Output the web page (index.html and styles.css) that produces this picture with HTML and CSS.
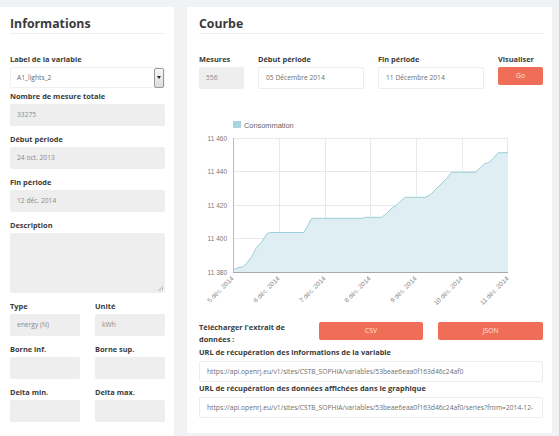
FILE: index.html
```html
<!DOCTYPE html>
<html lang="fr">
<head>
    <meta charset="UTF-8">
    <title>Variable - Courbe</title>
    <link rel="stylesheet" href="styles.css">
</head>
<body>
    <div class="panel panel-info">
        <div class="panel-head"><h2>Informations</h2></div>

        <div class="form">
            <div class="field field-select">
                <span class="field-label">Label de la variable</span>
                <div class="select">
                    <span>A1_lights_2</span>
                    <span class="select-arrow"></span>
                </div>
            </div>
            <div class="field">
                <span class="field-label">Nombre de mesure totale</span>
                <div class="box">33275</div>
            </div>
            <div class="field">
                <span class="field-label">Début période</span>
                <div class="box">24 oct. 2013</div>
            </div>
            <div class="field">
                <span class="field-label">Fin période</span>
                <div class="box">12 déc. 2014</div>
            </div>
            <div class="field">
                <span class="field-label">Description</span>
                <div class="box textarea"><span class="grip"></span></div>
            </div>
            <div class="field-pair">
                <div class="field">
                    <span class="field-label">Type</span>
                    <div class="box">energy (N)</div>
                </div>
                <div class="field">
                    <span class="field-label">Unité</span>
                    <div class="box">kWh</div>
                </div>
            </div>
            <div class="field-pair">
                <div class="field">
                    <span class="field-label">Borne inf.</span>
                    <div class="box"></div>
                </div>
                <div class="field">
                    <span class="field-label">Borne sup.</span>
                    <div class="box"></div>
                </div>
            </div>
            <div class="field-pair">
                <div class="field last">
                    <span class="field-label">Delta min.</span>
                    <div class="box"></div>
                </div>
                <div class="field last">
                    <span class="field-label">Delta max.</span>
                    <div class="box"></div>
                </div>
            </div>
        </div>
    </div>

    <div class="panel panel-curve">
        <div class="panel-head"><h2>Courbe</h2></div>

        <div class="filters">
            <div>
                <span class="field-label">Mesures</span>
                <div class="box">556</div>
            </div>
            <div>
                <span class="field-label">Début période</span>
                <div class="box white">05 Décembre 2014</div>
            </div>
            <div>
                <span class="field-label">Fin période</span>
                <div class="box white">11 Décembre 2014</div>
            </div>
            <div>
                <span class="field-label">Visualiser</span>
                <div class="btn btn-go">Go</div>
            </div>
        </div>

        <svg class="chart" width="344" height="210" viewBox="0 0 344 210">
            <!-- legende -->
            <rect x="34" y="21" width="8" height="7" fill="#a8d4e0"/>
            <text x="45" y="27.5" class="legend">Consommation</text>

            <!-- grille -->
            <g stroke="#e8e8e8" stroke-width="1">
                <line x1="34" y1="38.5" x2="309" y2="38.5"/>
                <line x1="34" y1="71.5" x2="309" y2="71.5"/>
                <line x1="34" y1="105.5" x2="309" y2="105.5"/>
                <line x1="34" y1="138.5" x2="309" y2="138.5"/>
                <line x1="80.5" y1="38" x2="80.5" y2="172"/>
                <line x1="126.5" y1="38" x2="126.5" y2="172"/>
                <line x1="171.5" y1="38" x2="171.5" y2="172"/>
                <line x1="217.5" y1="38" x2="217.5" y2="172"/>
                <line x1="263.5" y1="38" x2="263.5" y2="172"/>
                <line x1="308.5" y1="38" x2="308.5" y2="172"/>
            </g>

            <polygon fill="#dfeef3" points="34,172 34,170 39,167.7 44,166.7 47.7,163.3 52.7,156.7 57,148.3 62.7,141.7 68.3,133.3 71.7,132.5 105,132.5 112.7,118.3 163.7,118.3 166,117.3 182.7,117.3 187.7,113.3 192.7,108.3 197.7,105 201,101.7 206,97.3 226,97.3 231,95 234.3,91.7 241,85 247.7,78.3 252.7,72.3 276,72.3 281,68.3 285,64 289.3,62.7 292.7,60 299.3,52.7 309,52.7 309,172"/>
            <polyline fill="none" stroke="#9dcfd8" stroke-width="1" points="34,170 39,167.7 44,166.7 47.7,163.3 52.7,156.7 57,148.3 62.7,141.7 68.3,133.3 71.7,132.5 105,132.5 112.7,118.3 163.7,118.3 166,117.3 182.7,117.3 187.7,113.3 192.7,108.3 197.7,105 201,101.7 206,97.3 226,97.3 231,95 234.3,91.7 241,85 247.7,78.3 252.7,72.3 276,72.3 281,68.3 285,64 289.3,62.7 292.7,60 299.3,52.7 309,52.7"/>

            <!-- axes -->
            <line x1="34.5" y1="38" x2="34.5" y2="172" stroke="#bdbdbd"/>
            <line x1="34" y1="172.5" x2="309" y2="172.5" stroke="#a8a8a8"/>

            <g class="tick-y">
                <text x="28" y="40.5">11 460</text>
                <text x="28" y="74">11 440</text>
                <text x="28" y="107.5">11 420</text>
                <text x="28" y="141">11 400</text>
                <text x="28" y="174.5">11 380</text>
            </g>
            <g class="tick-x">
                <text x="35" y="179" transform="rotate(-45 35 179)">5 déc. 2014</text>
                <text x="81" y="179" transform="rotate(-45 81 179)">6 déc. 2014</text>
                <text x="127" y="179" transform="rotate(-45 127 179)">7 déc. 2014</text>
                <text x="172" y="179" transform="rotate(-45 172 179)">8 déc. 2014</text>
                <text x="218" y="179" transform="rotate(-45 218 179)">9 déc. 2014</text>
                <text x="264" y="179" transform="rotate(-45 264 179)">10 déc. 2014</text>
                <text x="310" y="179" transform="rotate(-45 310 179)">11 déc. 2014</text>
            </g>
        </svg>

        <div class="export">
            <span class="field-label wrap">Télécharger l'extrait de données :</span>
            <div class="btn">CSV</div>
            <div class="btn">JSON</div>
        </div>

        <div class="url-field">
            <span class="field-label">URL de récupération des informations de la variable</span>
            <div class="box white url">https://api.openrj.eu/v1/sites/CSTB_SOPHIA/variables/53beae6eaa0f163d46c24af0</div>
        </div>
        <div class="url-field">
            <span class="field-label">URL de récupération des données affichées dans le graphique</span>
            <div class="box white url">https://api.openrj.eu/v1/sites/CSTB_SOPHIA/variables/53beae6eaa0f163d46c24af0/series?from=2014-12-</div>
        </div>
    </div>
</body>
</html>
```

FILE: styles.css
```css
html, body {
    margin: 0;
    height: 436px;
    overflow: hidden;
}
body {
    background-color: #f1f2f4;
    font-family: "Open Sans", "Liberation Sans", sans-serif;
    color: #3a3a3a;
    display: flex;
    align-items: flex-start;
    gap: 13px;
    padding-top: 7px;
    box-sizing: border-box;
}
.panel {
    background-color: #FFFFFF;
    box-sizing: border-box;
}
.panel-info {
    width: 174px;
    padding: 0 9px 14px 10px;
}
.panel-curve {
    width: 365px;
    padding: 0 9px 15px 12px;
}
.panel-head {
    height: 26px;
    border-bottom: 1px solid #eeeeee;
}
.panel-head h2 {
    margin: 0;
    padding-top: 9px;
    font-size: 12.3px;
    line-height: 16px;
    font-weight: 700;
    color: #3b3b3b;
}
.form {
    margin-top: 20px;
}
.field {
    margin-bottom: 8px;
}
.field-select {
    margin-bottom: 3px;
}
.field.last {
    margin-bottom: 0;
}
.field-pair {
    display: grid;
    grid-template-columns: 1fr 1fr;
    gap: 15px;
}
.field-label {
    display: block;
    font-size: 7.4px;
    line-height: 10px;
    font-weight: 700;
    margin-bottom: 3px;
    white-space: nowrap;
}
.box {
    height: 22px;
    box-sizing: border-box;
    background-color: #eeeeee;
    border-radius: 2px;
    font-size: 6.7px;
    line-height: 22px;
    padding: 0 7px;
    color: #8a8a8a;
    white-space: nowrap;
    overflow: hidden;
}
.box.white {
    background-color: #FFFFFF;
    border: 1px solid #ececec;
    line-height: 20px;
    color: #6f6f6f;
}
.textarea {
    height: 60px;
    position: relative;
}
.grip {
    position: absolute;
    right: 2px;
    bottom: 2px;
    width: 5px;
    height: 5px;
    background: linear-gradient(135deg, transparent 45%, #b5b5b5 45%, #b5b5b5 55%, transparent 55%, transparent 70%, #b5b5b5 70%, #b5b5b5 80%, transparent 80%);
}
.select {
    height: 21px;
    box-sizing: border-box;
    border: 1px solid #f0f0f0;
    border-radius: 2px;
    display: flex;
    align-items: center;
    justify-content: space-between;
    padding-left: 6px;
    font-size: 6.7px;
    color: #6a6a6a;
}
.select-arrow {
    width: 10px;
    height: 20px;
    box-sizing: border-box;
    border: 1px solid #9a9a9a;
    border-radius: 2px;
    background: linear-gradient(#f7f7f7, #dcdcdc);
    display: flex;
    align-items: center;
    justify-content: center;
}
.select-arrow::after {
    content: "";
    border-left: 2px solid transparent;
    border-right: 2px solid transparent;
    border-top: 3px solid #222;
}
.filters {
    margin-top: 20px;
    display: grid;
    grid-template-columns: 45px 1fr 1fr 45px;
    gap: 14px;
}
.btn {
    height: 18px;
    background-color: #f06e58;
    border-radius: 2px;
    color: #fde3dd;
    font-size: 6.7px;
    line-height: 18px;
    text-align: center;
}
.chart {
    display: block;
    margin-top: 11px;
    font-family: "Liberation Sans", Arial, sans-serif;
}
.chart .legend {
    font-size: 7.4px;
    fill: #666;
}
.tick-y text {
    font-size: 6.5px;
    fill: #777;
    text-anchor: end;
}
.tick-x text {
    font-size: 6.5px;
    fill: #888;
    text-anchor: end;
}
.export {
    margin-top: 11px;
    display: grid;
    grid-template-columns: 1fr 1fr 1fr;
    gap: 15px;
    align-items: start;
}
.export .btn {
    margin-top: 1px;
}
.field-label.wrap {
    white-space: normal;
    line-height: 12px;
    margin-bottom: 0;
}
.url-field {
    margin-top: 2px;
}
.url-field + .url-field {
    margin-top: 1px;
}
.url-field .field-label {
    margin-bottom: 4px;
}
.url {
    height: 21px;
    line-height: 19px;
}
```
